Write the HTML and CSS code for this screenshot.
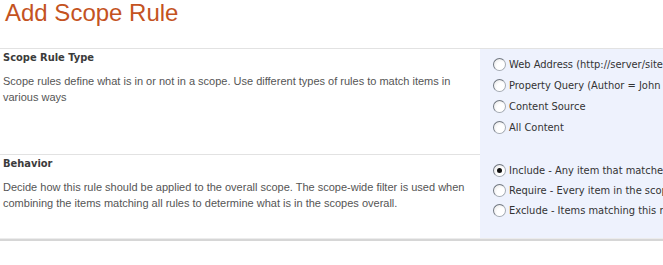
FILE: index.html
```html
<!DOCTYPE html>
<html>
<head>
<meta charset="utf-8">
<link rel="stylesheet" href="styles.css">
</head>
<body>
<div class="page">
  <h1 class="title">Add Scope Rule</h1>
  <div class="form">
    <div class="section first">
      <div class="desc-cell">
        <h3 class="sec-head">Scope Rule Type</h3>
        <p class="sec-desc">Scope rules define what is in or not in a scope. Use different types of rules to match items in various ways</p>
      </div>
      <div class="ctrl-cell">
        <label class="opt"><input type="radio" name="t"><span>Web Address (http://server/site)</span></label>
        <label class="opt"><input type="radio" name="t"><span>Property Query (Author = John Doe)</span></label>
        <label class="opt"><input type="radio" name="t"><span>Content Source</span></label>
        <label class="opt"><input type="radio" name="t"><span>All Content</span></label>
      </div>
    </div>
    <div class="section second">
      <div class="desc-cell">
        <h3 class="sec-head">Behavior</h3>
        <p class="sec-desc">Decide how this rule should be applied to the overall scope. The scope-wide filter is used when combining the items matching all rules to determine what is in the scopes overall.</p>
      </div>
      <div class="ctrl-cell">
        <label class="opt"><input type="radio" name="b" checked><span>Include - Any item that matches the rule will be included</span></label>
        <label class="opt"><input type="radio" name="b"><span>Require - Every item in the scope must match this rule</span></label>
        <label class="opt"><input type="radio" name="b"><span>Exclude - Items matching this rule will be excluded</span></label>
      </div>
    </div>
    <div class="bottom-line"></div>
  </div>
</div>
</body>
</html>
```
FILE: styles.css
```css
html, body {
  margin: 0;
  padding: 0;
  background: #ffffff;
  overflow: hidden;
}
.page {
  width: 663px;
  overflow: hidden;
}
.title {
  margin: 0;
  padding: 0 0 0 5px;
  height: 48px;
  font-family: "Liberation Sans", Arial, sans-serif;
  font-weight: normal;
  font-size: 24px;
  line-height: 25px;
  color: #c4531f;
}
.form {
  width: 800px;
  border-top: 1px solid #e2e2e2;
}
.section {
  display: grid;
  grid-template-columns: 480px 320px;
}
.section.second .desc-cell {
  border-top: 1px solid #e2e2e2;
}
.desc-cell {
  padding: 0 10px 0 3px;
}
.section.first .desc-cell { height: 105px; }
.section.second .desc-cell { height: 83px; }
.ctrl-cell {
  background: #eef2fd;
  display: flex;
  flex-direction: column;
  padding: 5px 0 0 13px;
}
.section.second .ctrl-cell { padding-top: 6px; }
.sec-head {
  margin: 0;
  padding-top: 2px;
  font-family: "DejaVu Sans Condensed", "DejaVu Sans", sans-serif;
  font-weight: bold;
  font-size: 11px;
  line-height: 14px;
  color: #3b3b3b;
}
.sec-desc {
  margin: 8px 0 0 0;
  font-family: "Liberation Sans", Arial, sans-serif;
  font-size: 11px;
  line-height: 16px;
  color: #555555;
}
.opt {
  display: flex;
  align-items: center;
  height: 21px;
  white-space: nowrap;
  font-family: "DejaVu Sans Condensed", "DejaVu Sans", sans-serif;
  font-size: 11px;
  color: #333333;
}
.section.second .opt { height: 20px; }
.opt input {
  appearance: none;
  -webkit-appearance: none;
  margin: 0 3px 0 0;
  width: 13px;
  height: 13px;
  border-radius: 50%;
  border: 1px solid #a4aab2;
  border-top-color: #707780;
  border-left-color: #707780;
  background: radial-gradient(circle at 65% 65%, #ffffff 0 40%, #e2e2e2 100%);
  box-sizing: border-box;
  position: relative;
  flex: none;
}
.opt input:checked::after {
  content: "";
  position: absolute;
  left: 3px;
  top: 3px;
  width: 5px;
  height: 5px;
  border-radius: 50%;
  background: #111111;
}
.bottom-line {
  height: 1px;
  background: #ececec;
  border-bottom: 2px solid #d6d6d6;
}
```
